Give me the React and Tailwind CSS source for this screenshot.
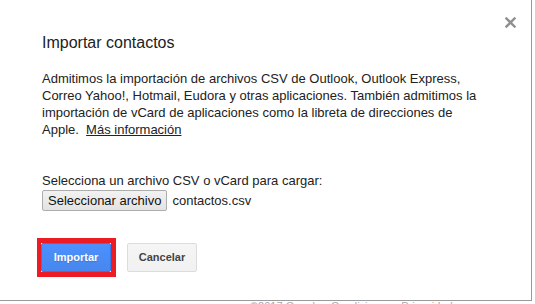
function CloseIcon() {
  return (
    <svg width="11" height="11" viewBox="0 0 11 11" className="block">
      <path d="M1.5 1.5 L9.5 9.5 M9.5 1.5 L1.5 9.5" stroke="#8f8f8f" strokeWidth="2.4" strokeLinecap="square" />
    </svg>
  )
}

export default function App() {
  return (
    <div className="relative w-[535px] h-[304px] overflow-hidden bg-white font-['Arial','Liberation_Sans',sans-serif] text-[#222]">
      <div className="relative w-[532px] h-[301px] bg-white border-r border-b border-[#9a9a9a] pl-[42px] pt-[33px]">
        <button className="absolute top-[17px] right-[15px] p-0">
          <CloseIcon />
        </button>

        <h1 className="text-[16px] leading-[20px] font-normal">Importar contactos</h1>

        <p className="mt-[17px] text-[13px] leading-[17px] whitespace-nowrap">
          Admitimos la importación de archivos CSV de Outlook, Outlook Express,
          <br />
          Correo Yahoo!, Hotmail, Eudora y otras aplicaciones. También admitimos la
          <br />
          importación de vCard de aplicaciones como la libreta de direcciones de
          <br />
          Apple.&nbsp;&nbsp;<a className="underline text-[#222]">Más información</a>
        </p>

        <div className="mt-[34px] text-[13px] leading-[17px]">
          Selecciona un archivo CSV o vCard para cargar:
        </div>
        <div className="mt-[1px] flex items-center gap-[5px] text-[13px]">
          <button className="h-[21px] px-[5px] border border-[#adadad] rounded-[2px] bg-gradient-to-b from-[#f2f2f2] to-[#e3e3e3] text-[13px] leading-[17px] text-[#111]">
            Seleccionar archivo
          </button>
          <span>contactos.csv</span>
        </div>

        <div className="mt-[27px] -ml-[5px] flex items-center">
          <div className="border-[5px] border-l-4 border-[#ed1c24]">
            <button className="block w-[70px] h-[29px] rounded-[2px] border border-[#3079ed] bg-gradient-to-b from-[#4d90fe] to-[#4787ed] text-white text-[11px] font-bold [text-shadow:0_1px_1px_rgba(0,0,0,0.15)]">
              Importar
            </button>
          </div>
          <button className="ml-[11px] w-[70px] h-[29px] rounded-[2px] border border-[#dcdcdc] bg-gradient-to-b from-[#f5f5f5] to-[#f1f1f1] text-[#444] text-[11px] font-bold">
            Cancelar
          </button>
        </div>
      </div>

      <div className="absolute left-[250px] top-[300px] text-[11px] leading-[13px] text-[#aaa] whitespace-nowrap">
        ©2017 Google - Condiciones - Privacidad
      </div>
    </div>
  )
}
